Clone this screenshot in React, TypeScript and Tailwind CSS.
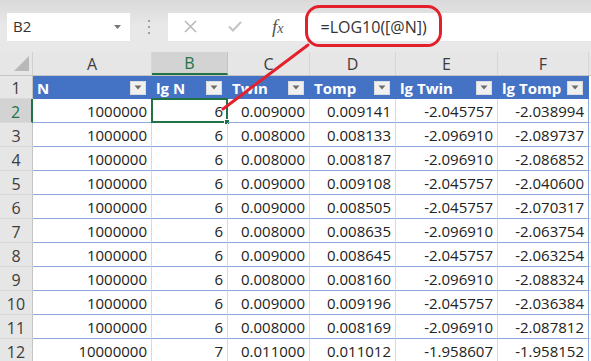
import React from "react";

const cols = [
  { letter: "A", w: "w-[119px]", title: "N" },
  { letter: "B", w: "w-[76px]", title: "lg N" },
  { letter: "C", w: "w-[82px]", title: "Twin" },
  { letter: "D", w: "w-[86px]", title: "Tomp" },
  { letter: "E", w: "w-[102px]", title: "lg Twin" },
  { letter: "F", w: "w-[91px]", title: "lg Tomp" },
];

const rows = [
  ["1000000", "6", "0.009000", "0.009141", "-2.045757", "-2.038994"],
  ["1000000", "6", "0.008000", "0.008133", "-2.096910", "-2.089737"],
  ["1000000", "6", "0.008000", "0.008187", "-2.096910", "-2.086852"],
  ["1000000", "6", "0.009000", "0.009108", "-2.045757", "-2.040600"],
  ["1000000", "6", "0.009000", "0.008505", "-2.045757", "-2.070317"],
  ["1000000", "6", "0.008000", "0.008635", "-2.096910", "-2.063754"],
  ["1000000", "6", "0.009000", "0.008645", "-2.045757", "-2.063254"],
  ["1000000", "6", "0.008000", "0.008160", "-2.096910", "-2.088324"],
  ["1000000", "6", "0.009000", "0.009196", "-2.045757", "-2.036384"],
  ["1000000", "6", "0.008000", "0.008169", "-2.096910", "-2.087812"],
  ["10000000", "7", "0.011000", "0.011012", "-1.958607", "-1.958152"],
];

const FilterButton = () => (
  <div className="w-[16px] h-[14px] bg-[#f0f0f0] border border-[#dcdcdc] flex items-center justify-center shrink-0">
    <svg width="8" height="5" viewBox="0 0 8 5">
      <path d="M0.5 0.5 L7.5 0.5 L4 4.5 Z" fill="#6b6b6b" />
    </svg>
  </div>
);

const App = () => {
  return (
    <div className="w-[591px] h-[361px] bg-[#e6e6e6] overflow-hidden relative font-['Open_Sans',sans-serif] text-[#222]">
      {/* formula bar */}
      <div className="h-[52px] pt-[12px] bg-gradient-to-b from-[#dadada] via-[#e8e8e8] to-[#e8e8e8]">
        <div className="flex items-center h-[29px]">
          <div className="ml-[7px] w-[123px] h-[28px] bg-white flex items-center justify-between pl-[6px] pr-[9px]">
            <span className="text-[15px] text-[#333]">B2</span>
            <svg width="7" height="4" viewBox="0 0 7 4">
              <path d="M0 0 L7 0 L3.5 4 Z" fill="#777" />
            </svg>
          </div>
          <div className="w-[38px] flex flex-col items-center gap-[4px]">
            <span className="w-[2px] h-[2px] bg-[#a0a0a0]" />
            <span className="w-[2px] h-[2px] bg-[#a0a0a0]" />
            <span className="w-[2px] h-[2px] bg-[#a0a0a0]" />
          </div>
          <div className="flex-1 h-[28px] bg-white flex items-center">
            <svg className="ml-[16px]" width="13" height="13" viewBox="0 0 13 13">
              <path d="M1 1 L12 12 M12 1 L1 12" stroke="#b9b9b9" strokeWidth="1.6" />
            </svg>
            <svg className="ml-[31px]" width="14" height="11" viewBox="0 0 14 11">
              <path d="M1 5.5 L5 9.5 L13 1" stroke="#c4c4c4" strokeWidth="2" fill="none" />
            </svg>
            <span className="ml-[30px] font-['Liberation_Serif',serif] italic text-[19px] text-[#555] leading-none">
              f<span className="text-[14px]">x</span>
            </span>
            <span className="ml-[37px] text-[16px] text-[#333]">=LOG10([@N])</span>
          </div>
        </div>
      </div>

      {/* column headers */}
      <div className="flex h-[24px] border-b border-[#c4c4c4]">
        <div className="w-[33px] h-full border-r border-[#d0d0d0] flex items-end justify-end pr-[3px] pb-[4px] shrink-0">
          <svg width="15" height="15" viewBox="0 0 15 15">
            <path d="M15 0 L15 15 L0 15 Z" fill="#b8b8b8" />
          </svg>
        </div>
        {cols.map((c) => (
          <div
            key={c.letter}
            className={`${c.w} h-full shrink-0 flex items-center justify-center text-[16px] border-r ${
              c.letter === "B"
                ? "bg-[#d3d3d3] text-[#217346] border-b-2 border-b-[#217346] border-r-[#c4c4c4]"
                : "text-[#3c3c3c] border-r-[#d6d6d6]"
            }`}
          >
            {c.letter}
          </div>
        ))}
        <div className="flex-1" />
      </div>

      {/* row 1: table header */}
      <div className="flex h-[23px]">
        <div className="w-[33px] shrink-0 border-r border-[#c4c4c4] border-b border-b-[#d8d8d8] flex items-center justify-center pt-[1px] text-[16px] text-[#3c3c3c]">
          1
        </div>
        {cols.map((c) => (
          <div
            key={c.letter}
            className={`${c.w} shrink-0 bg-[#4472c4] flex items-center justify-between pl-[4px] pr-[5px] border-r border-[#4472c4]`}
          >
            <span className="text-white font-bold text-[15px] leading-none pt-[1px]">{c.title}</span>
            <FilterButton />
          </div>
        ))}
        <div className="flex-1 bg-white" />
      </div>

      {/* data rows */}
      {rows.map((r, i) => {
        const rowNum = i + 2;
        const selectedRow = rowNum === 2;
        return (
          <div key={rowNum} className="flex h-[24px] bg-white">
            <div
              className={`w-[33px] shrink-0 flex items-center justify-center pt-[2px] text-[16px] border-b border-b-[#d8d8d8] ${
                selectedRow
                  ? "bg-[#d3d3d3] text-[#217346] border-r-2 border-r-[#217346]"
                  : "bg-[#e6e6e6] text-[#3c3c3c] border-r border-r-[#c4c4c4]"
              }`}
            >
              {rowNum}
            </div>
            {r.map((v, j) => (
              <div
                key={j}
                className={`${cols[j].w} shrink-0 relative flex items-center justify-end pr-[4px] pt-[2px] text-[15px] border-b border-b-[#8eaadb] ${
                  j === 5 ? "border-r border-r-[#8eaadb]" : "border-r border-r-[#dadada]"
                }`}
              >
                {v}
                {selectedRow && j === 1 && (
                  <div className="absolute -left-[1px] -top-[1px] w-[77px] h-[25px] border-2 border-[#217346]">
                    <div className="absolute -right-[4px] -bottom-[4px] w-[6px] h-[6px] bg-[#217346] border border-white" />
                  </div>
                )}
              </div>
            ))}
            <div className="flex-1 border-b border-b-[#dadada]" />
          </div>
        );
      })}

      {/* annotation */}
      <svg className="absolute left-0 top-0 pointer-events-none" width="591" height="361">
        <rect x="306.5" y="6.5" width="134" height="39" rx="13" fill="none" stroke="#e3202b" strokeWidth="3" />
        <path d="M308 45 L223 109" stroke="#e3202b" strokeWidth="3" strokeLinecap="round" />
      </svg>
    </div>
  );
};

export default App;
